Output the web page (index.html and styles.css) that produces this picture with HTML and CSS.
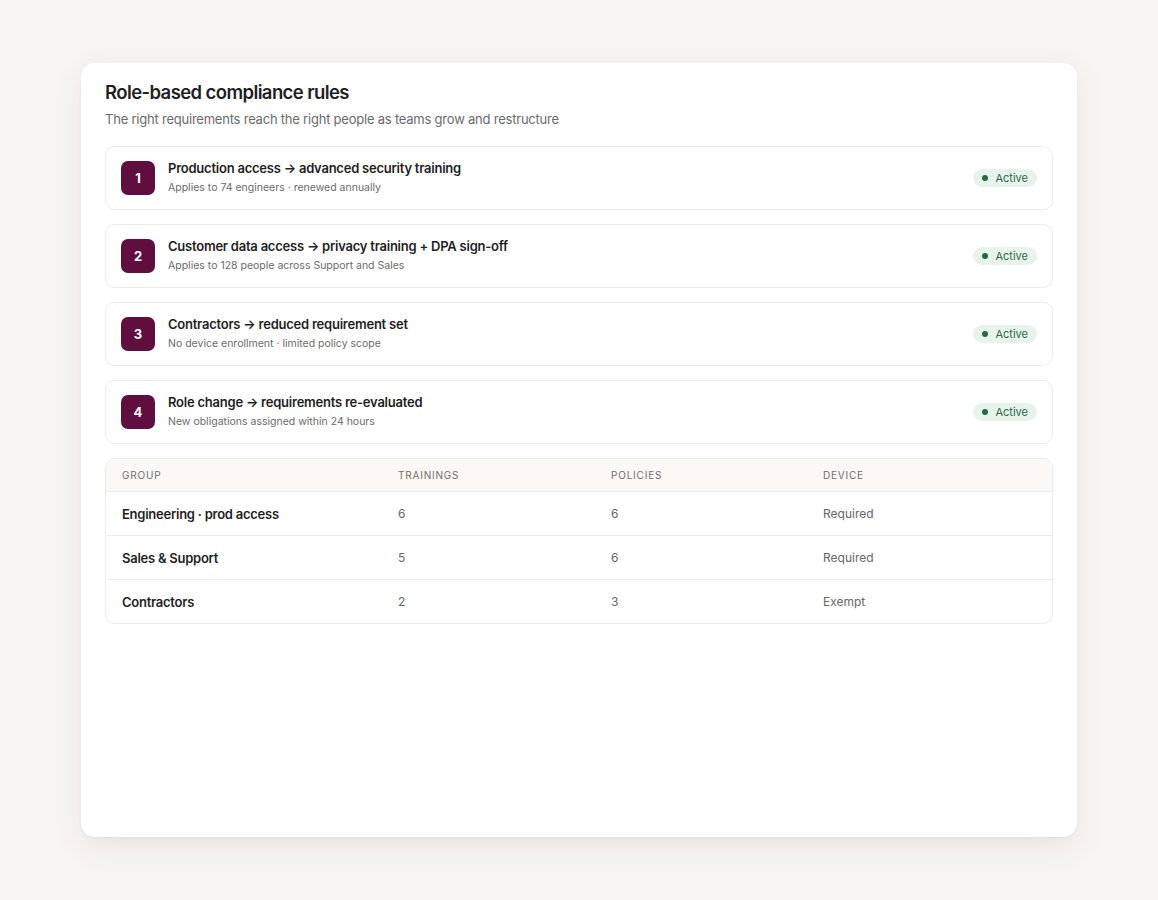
FILE: index.html
```html
<!DOCTYPE html>
<html lang="en">
<head>
<meta charset="utf-8">
<link rel="stylesheet" href="styles.css">
</head>
<body>
<div class="card">
  <h1 class="title">Role-based compliance rules</h1>
  <p class="subtitle">The right requirements reach the right people as teams grow and restructure</p>
  <div class="rules">
    <div class="rule">
      <div class="num">1</div>
      <div class="rule-text">
        <div class="rule-title">Production access → advanced security training</div>
        <div class="rule-sub">Applies to 74 engineers · renewed annually</div>
      </div>
      <div class="pill"><span class="dot"></span>Active</div>
    </div>
    <div class="rule">
      <div class="num">2</div>
      <div class="rule-text">
        <div class="rule-title">Customer data access → privacy training + DPA sign-off</div>
        <div class="rule-sub">Applies to 128 people across Support and Sales</div>
      </div>
      <div class="pill"><span class="dot"></span>Active</div>
    </div>
    <div class="rule">
      <div class="num">3</div>
      <div class="rule-text">
        <div class="rule-title">Contractors → reduced requirement set</div>
        <div class="rule-sub">No device enrollment · limited policy scope</div>
      </div>
      <div class="pill"><span class="dot"></span>Active</div>
    </div>
    <div class="rule">
      <div class="num">4</div>
      <div class="rule-text">
        <div class="rule-title">Role change → requirements re-evaluated</div>
        <div class="rule-sub">New obligations assigned within 24 hours</div>
      </div>
      <div class="pill"><span class="dot"></span>Active</div>
    </div>
  </div>
  <div class="table">
    <div class="trow thead">
      <div>GROUP</div><div>TRAININGS</div><div>POLICIES</div><div>DEVICE</div>
    </div>
    <div class="trow">
      <div class="grp">Engineering · prod access</div><div>6</div><div>6</div><div>Required</div>
    </div>
    <div class="trow">
      <div class="grp">Sales &amp; Support</div><div>5</div><div>6</div><div>Required</div>
    </div>
    <div class="trow">
      <div class="grp">Contractors</div><div>2</div><div>3</div><div>Exempt</div>
    </div>
  </div>
</div>
</body>
</html>
```

FILE: styles.css
```css
* { box-sizing: border-box; }
html, body { margin: 0; padding: 0; }
body {
  background: #f7f6f3;
  font-family: Inter, "Noto Sans", sans-serif;
  color: #222;
  padding: 63px 81px 63px 81px;
}
.card {
  width: 996px;
  height: 774px;
  background: #fff;
  border-radius: 14px;
  box-shadow: 0 10px 30px rgba(120, 60, 80, 0.10), 0 1px 3px rgba(0,0,0,0.04);
  padding: 17px 24px 24px 24px;
}
.title {
  margin: 0;
  font-size: 18.5px;
  font-weight: 600;
  line-height: 24px;
  letter-spacing: -0.6px;
  color: #1f1f1f;
}
.subtitle {
  margin: 6px 0 0 0;
  font-size: 13px;
  line-height: 18px;
  letter-spacing: -0.22px;
  color: #6b6b6b;
}
.rules {
  margin-top: 18px;
  display: flex;
  flex-direction: column;
  gap: 14px;
}
.rule {
  height: 64px;
  border: 1px solid #ebebeb;
  border-radius: 10px;
  display: flex;
  align-items: center;
  padding: 0 15px 0 15px;
}
.num {
  width: 34px;
  height: 34px;
  border-radius: 7px;
  background: #5f0e3f;
  color: #fff;
  font-size: 13px;
  font-weight: 700;
  display: flex;
  align-items: center;
  justify-content: center;
  flex: none;
}
.rule-text {
  margin-left: 13px;
  flex: 1;
  display: flex;
  flex-direction: column;
  gap: 4px;
  margin-top: -3px;
}
.rule-title {
  font-size: 13px;
  font-weight: 600;
  line-height: 18px;
  letter-spacing: -0.23px;
  color: #1f1f1f;
}
.rule-sub {
  font-size: 10.5px;
  line-height: 14px;
  color: #6b6b6b;
}
.pill {
  display: flex;
  align-items: center;
  gap: 7px;
  height: 18px;
  padding: 0 9px 0 9px;
  border-radius: 9px;
  background: #e8f3eb;
  color: #2c6a46;
  font-size: 11px;
  font-weight: 400;
}
.dot {
  width: 6px;
  height: 6px;
  border-radius: 50%;
  background: #1f6b43;
}
.table {
  margin-top: 14px;
  border: 1px solid #ebebeb;
  border-radius: 10px;
  overflow: hidden;
}
.trow {
  display: grid;
  grid-template-columns: 276px 213px 212px 1fr;
  height: 44px;
  align-items: center;
  padding-left: 16px;
  border-top: 1px solid #ececec;
  font-size: 12px;
  color: #666;
}
.trow:first-child { border-top: none; }
.thead {
  height: 32px;
  background: #fbf8f5;
  font-size: 10px;
  letter-spacing: 0.8px;
  color: #6f6f6f;
}
.grp {
  font-size: 13px;
  font-weight: 600;
  letter-spacing: -0.25px;
  color: #1f1f1f;
}
```
